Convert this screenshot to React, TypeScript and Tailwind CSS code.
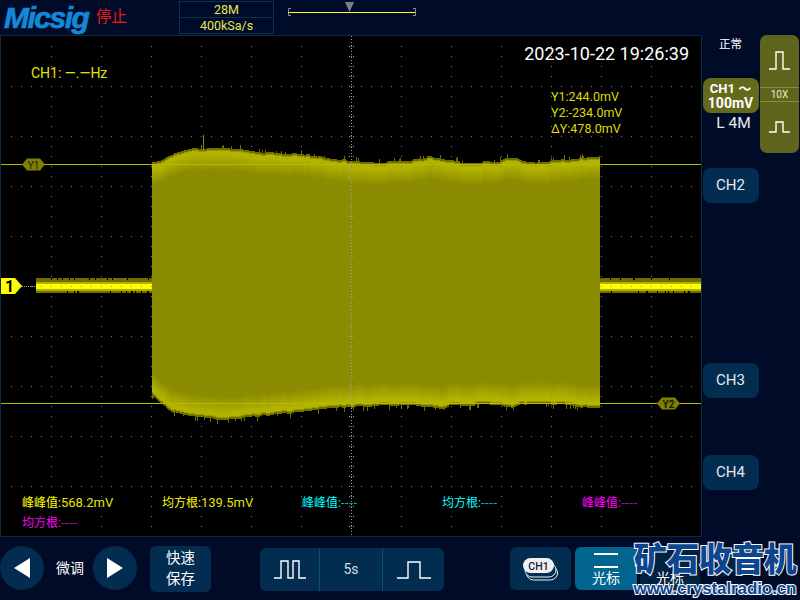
import React from "react";

const SANS = "font-['Roboto','Noto_Sans_CJK_SC',sans-serif]";

const TOP: [number, number][] = [[152,162],[160,161],[170,155],[182,152],[193,149],[220,148],[240,149],[263,153],[300,154],[320,157],[340,160],[380,163],[408,161],[422,159],[428,157],[443,159],[450,161],[463,163],[500,162],[505,159],[517,159],[522,162],[530,163],[567,160],[590,157],[600,157]];
const BOT: [number, number][] = [[152,395],[160,403],[173,412],[190,416],[217,419],[240,418],[263,415],[300,412],[330,408],[380,405],[413,405],[423,407],[442,408],[450,405],[500,404],[505,406],[513,408],[520,404],[570,404],[577,407],[597,408],[600,408]];

function interp(pts: [number, number][], x: number) {
  for (let i = 1; i < pts.length; i++) {
    if (x <= pts[i][0]) {
      const [a, b] = pts[i - 1];
      const [c, d] = pts[i];
      return b + ((d - b) * (x - a)) / (c - a);
    }
  }
  return pts[pts.length - 1][1];
}

function rng(seed: number) {
  let s = seed;
  return () => {
    s = (s * 1664525 + 1013904223) % 4294967296;
    return s / 4294967296;
  };
}

function hexLevel(v: number) {
  const h = Math.round(v).toString(16).padStart(2, "0");
  return `#${h}${h}00`;
}

function level(d: number) {
  if (d < 2) return 0x6f;
  if (d < 3) return 0x9a;
  if (d < 6) return 0xb2;
  if (d >= 22) return 0x8c;
  return 0xb2 - ((d - 6) / 16) * (0xb2 - 0x8c);
}

function buildWave() {
  const r = rng(7);
  const buckets: Record<string, string> = {};
  const seg = (c: string, x: number, a: number, b: number) => {
    if (b <= a) return;
    buckets[c] = (buckets[c] || "") + `M${x + 0.5} ${a}V${b}`;
  };
  let jt = 0;
  let jb = 0;
  let left = 0;
  for (let x = 152; x < 600; x++) {
    if (left-- <= 0) {
      left = 2 + Math.floor(r() * 9);
      jt = r() < 0.35 ? -1 : 0;
      jb = r() < 0.35 ? 1 : 0;
    }
    const t = Math.round(interp(TOP, x)) + jt;
    const b = Math.round(interp(BOT, x)) + jb;
    const spikeT = r() < 0.08 ? 2 + Math.floor(r() * 3) : 0;
    const spikeB = r() < 0.08 ? 2 + Math.floor(r() * 3) : 0;
    seg(x % 5 === 0 ? "#8a8a00" : "#8c8c00", x, t + 22, b - 22);
    seg("#6f6f00", x, t - spikeT, t);
    seg("#6f6f00", x, b, b + spikeB);
    for (let d = 0; d < 22; d++) {
      const c = hexLevel(level(d));
      seg(c, x, t + d, t + d + 1);
      seg(c, x, b - d - 1, b - d);
    }
  }
  const base = (x: number) => {
    const n1 = r() < 0.07 ? 2 : 0;
    const n2 = r() < 0.14 ? 2 : 0;
    seg("#6f6f00", x, 278 + n1, 282);
    seg("#b0b000", x, 282, 284);
    seg("#ffff00", x, 284, 289);
    seg("#b0b000", x, 289, 291);
    seg("#6f6f00", x, 291, 293 - n2);
  };
  for (let x = 36; x < 152; x++) base(x);
  for (let x = 600; x < 701; x++) base(x);
  return Object.entries(buckets);
}

function buildGrid() {
  let d = "";
  for (let y = 86; y < 536; y += 50) for (let x = 11; x < 701; x += 10) d += `M${x} ${y}h1v1h-1z`;
  for (let x = 51; x < 701; x += 50) for (let y = 46; y < 536; y += 10) d += `M${x} ${y}h1v1h-1z`;
  let c = "";
  for (let y = 36; y < 536; y += 3) c += `M351 ${y}h1v1h-1z`;
  for (let y = 46; y < 536; y += 10) c += `M349 ${y}h1v1h-1zM353 ${y}h1v1h-1z`;
  for (let x = 22; x < 36; x += 2) c += `M${x} 286h1v1h-1z`;
  return { d, c };
}

const wave = buildWave();
const grid = buildGrid();

function Pulse({ w, h, d }: { w: number; h: number; d: string }) {
  return (
    <svg width={w} height={h} viewBox={`0 0 ${w} ${h}`} fill="none" stroke="#ffffff" strokeWidth="1.4">
      <path d={d} />
    </svg>
  );
}

function Measure({ label, value, cls, vcls }: { label: string; value: string; cls: string; vcls: string }) {
  return (
    <div className={`text-[12px] leading-[20px] whitespace-nowrap ${cls}`}>
      {label}:<span className={`text-[13px] ${vcls}`}>{value}</span>
    </div>
  );
}

function ChButton({ name, cls }: { name: string; cls: string }) {
  return (
    <div className={`w-[56px] h-[35px] rounded-[8px] bg-[#022c50] flex items-center justify-center text-[15px] text-[#e4e8ec] ${cls}`}>
      {name}
    </div>
  );
}

export default function App() {
  return (
    <div className={`w-[800px] h-[600px] flex flex-col overflow-hidden relative bg-[#000b28] ${SANS}`}>
      {/* header */}
      <div className="h-[35px] flex items-center shrink-0">
        <div className="ml-[4px] w-[92px] font-['Liberation_Sans',sans-serif] font-bold italic text-[30px] tracking-[-1.5px] leading-none text-[#1488d8] [-webkit-text-stroke:0.7px_#1488d8]">
          Micsig
        </div>
        <div className="w-[83px] text-[15.5px] text-[#f01818] leading-none">停止</div>
        <div className="w-[95px] h-[33px] border border-[#0c3050] flex flex-col text-[12.5px] text-[#e8e850] text-center">
          <div className="h-[16px] leading-[16px] border-b border-[#0c3050]">28M</div>
          <div className="flex-1 leading-[16px]">400kSa/s</div>
        </div>
        <svg width="142" height="35" viewBox="0 0 142 35" fill="none">
          <path d="M14.5 8.5V15.5M14.5 8.5H17M14.5 15.5H17M141.5 8.5V15.5M141.5 8.5H139M141.5 15.5H139" stroke="#8a8f98" strokeWidth="1" />
          <path d="M14 12.5H141" stroke="#ffff20" strokeWidth="1.2" />
          <path d="M71 2H80L75.5 12Z" fill="#7b7f88" />
        </svg>
      </div>

      {/* middle */}
      <div className="h-[502px] flex shrink-0">
        <div className="w-[702px] h-full relative border border-[#0a2a40] bg-black overflow-hidden">
          <svg className="absolute left-[-1px] top-[-36px]" width="702" height="537" viewBox="0 0 702 537" shapeRendering="crispEdges">
            {wave.map(([c, d]) => (
              <path key={c} d={d} stroke={c} strokeWidth="1" fill="none" />
            ))}
            <path d="M203.5 135V150" stroke="#8a8a00" strokeWidth="1" />
            <path d="M0 164.5H701M0 403.5H701" stroke="#b8b800" strokeWidth="1" />
            <path d={grid.d} fill="#808080" />
            <path d={grid.c} fill="#a0a0a0" />
          </svg>

          {/* cursor and trigger tags */}
          <svg className="absolute left-[-1px] top-[-36px]" width="702" height="537" viewBox="0 0 702 537">
            <path d="M22 164.5L27 158.5H40L45 164.5L40 170.5H27Z" fill="#808000" />
            <text x="33.5" y="168.5" textAnchor="middle" fontSize="10" fill="#1c1c00" fontFamily="Roboto">Y1</text>
            <path d="M657 403.5L662 397.5H675L680 403.5L675 409.5H662Z" fill="#808000" />
            <text x="668.5" y="407.5" textAnchor="middle" fontSize="10" fontWeight="700" fill="#1c1c00" fontFamily="Roboto">Y2</text>
            <path d="M1 278H15L22 286L15 294H1Z" fill="#ffff00" />
            <text x="9.5" y="292" textAnchor="middle" fontSize="16" fontWeight="700" fill="#000" fontFamily="Roboto">1</text>
          </svg>

          <div className="absolute left-[30px] top-[29px] text-[14px] leading-[16px] text-[#e4e400] whitespace-nowrap">CH1: —.—Hz</div>
          <div className="absolute right-[12px] top-[7px] text-[18px] leading-[22px] text-white whitespace-nowrap">2023-10-22 19:26:39</div>
          <div className="absolute left-[550px] top-[53px] text-[12.5px] leading-[16px] text-[#dcdc00] flex flex-col">
            <span>Y1:244.0mV</span>
            <span>Y2:-234.0mV</span>
            <span>ΔY:478.0mV</span>
          </div>

          <div className="absolute left-[21px] top-[457px] w-[680px] grid grid-cols-[140px_140px_140px_140px_120px]">
            <Measure label="峰峰值" value="568.2mV" cls="text-[#ffff00]" vcls="text-[#e4e400]" />
            <Measure label="均方根" value="139.5mV" cls="text-[#ffff00]" vcls="text-[#e4e400]" />
            <Measure label="峰峰值" value="----" cls="text-[#00ffff]" vcls="text-[#00b0b0] tracking-[0.6px]" />
            <Measure label="均方根" value="----" cls="text-[#00ffff]" vcls="text-[#00b0b0] tracking-[0.6px]" />
            <Measure label="峰峰值" value="----" cls="text-[#ff00ff]" vcls="text-[#b000b0] tracking-[0.6px]" />
            <Measure label="均方根" value="----" cls="text-[#ff00ff]" vcls="text-[#b000b0] tracking-[0.6px]" />
          </div>
        </div>

        {/* right column */}
        <div className="flex-1 flex">
          <div className="w-[57px] flex flex-col items-center">
            <div className="h-[19px] text-[11.5px] leading-[19px] text-white">正常</div>
            <div className="mt-[24px] w-[56px] h-[35px] rounded-[8px] bg-[#646a1c] text-white font-bold flex flex-col items-center justify-center">
              <span className="text-[13px] leading-[15px]">CH1 ～</span>
              <span className="text-[14px] leading-[15px]">100mV</span>
            </div>
            <div className="mt-[1px] pl-[6px] text-[15.5px] leading-[18px] text-[#e8ecf0]">L 4M</div>
            <ChButton name="CH2" cls="mt-[36px]" />
            <ChButton name="CH3" cls="mt-[160px]" />
            <ChButton name="CH4" cls="mt-[57px]" />
          </div>
          <div className="ml-[1px] w-[39px] h-[118px] rounded-[7px] bg-[#5f641c] flex flex-col">
            <div className="h-[52px] flex items-end justify-center pb-[17px]">
              <Pulse w={21} h={19} d="M0 18H7V1H14V18H21" />
            </div>
            <div className="h-[15px] border-y border-[#8a8e30] text-[10px] leading-[13px] text-center text-[#e8e8d0]">10X</div>
            <div className="flex-1 flex items-start justify-center pt-[19px]">
              <Pulse w={21} h={12} d="M0 11H7V1H14V11H21" />
            </div>
          </div>
        </div>
      </div>

      {/* bottom */}
      <div className="flex-1 flex items-start pt-[9px]">
        <div className="w-[44px] h-[44px] rounded-full bg-[#022c50] flex items-center justify-center">
          <svg width="44" height="44" viewBox="0 0 44 44"><path d="M30 12V32L14 22Z" fill="#fff" /></svg>
        </div>
        <div className="w-[49px] h-[44px] pl-[3px] flex items-center justify-center text-[14px] text-white">微调</div>
        <div className="w-[44px] h-[44px] rounded-full bg-[#022c50] flex items-center justify-center">
          <svg width="44" height="44" viewBox="0 0 44 44"><path d="M14 12V32L30 22Z" fill="#fff" /></svg>
        </div>
        <div className="ml-[13px] w-[61px] h-[46px] rounded-[6px] bg-[#022c50] flex flex-col items-center justify-center text-[14.5px] leading-[21px] text-white">
          <span>快速</span>
          <span>保存</span>
        </div>
        <div className="ml-[49px] mt-[2px] w-[184px] h-[43px] rounded-[6px] bg-[#022c50] flex items-center">
          <div className="w-[60px] h-full flex items-center justify-center border-r border-[#06507e]">
            <Pulse w={32} h={19} d="M0 18H7V1H14V18H19V1H25V18H32" />
          </div>
          <div className="w-[63px] h-full flex items-center justify-center border-r border-[#06507e] text-[14px] text-[#d8dce0]">5s</div>
          <div className="flex-1 h-full flex items-center justify-center">
            <Pulse w={34} h={18} d="M0 17H11V1H23V17H34" />
          </div>
        </div>
        <div className="ml-[66px] mt-[1px] w-[61px] h-[43px] rounded-[6px] bg-[#022c50] flex items-center justify-center">
          <svg width="37" height="24" viewBox="0 0 37 24" fill="none">
            <rect x="4.5" y="9" width="31" height="14" rx="7" fill="#022c50" stroke="#f0f0f0" />
            <rect x="3" y="6" width="31" height="14" rx="7" fill="#022c50" stroke="#f0f0f0" />
            <rect x="1" y="1" width="31" height="15" rx="7.5" fill="#f0f0f0" />
            <text x="16.5" y="12.5" textAnchor="middle" fontSize="10.5" fontWeight="500" fill="#102030" fontFamily="Roboto">CH1</text>
          </svg>
        </div>
        <div className="ml-[4px] mt-[1px] w-[62px] h-[43px] rounded-[6px] bg-[#01658f] flex flex-col items-center text-white">
          <div className="mt-[6px] w-[24px] h-[15px] border-y-2 border-white" />
          <div className="text-[14px] leading-[17px] mt-[2px]">光标</div>
        </div>
        <div className="ml-[3px] mt-[1px] w-[60px] h-[43px] rounded-[6px] bg-[#012240] flex flex-col items-center justify-end text-white">
          <div className="text-[14px] leading-[17px] mb-[3px]">光标</div>
        </div>
        <div className="ml-[8px] mt-[1px] w-[30px] h-[30px] rounded-full bg-[#012240]" />
      </div>

      {/* site watermark */}
      <div className="absolute left-[633px] top-[536px] w-[164px] h-[63px] flex flex-col items-center font-['Noto_Sans_CJK_SC',sans-serif] text-[#0c4590] [-webkit-text-stroke:2px_#ffffff] [paint-order:stroke_fill]">
        <div className="text-[33px] leading-[43px] font-black whitespace-nowrap tracking-[-0.5px]">矿石收音机</div>
        <div className="text-[17px] leading-[20px] font-bold whitespace-nowrap font-['Liberation_Sans',sans-serif] tracking-[-0.1px]">www.crystalradio.cn</div>
      </div>
    </div>
  );
}
